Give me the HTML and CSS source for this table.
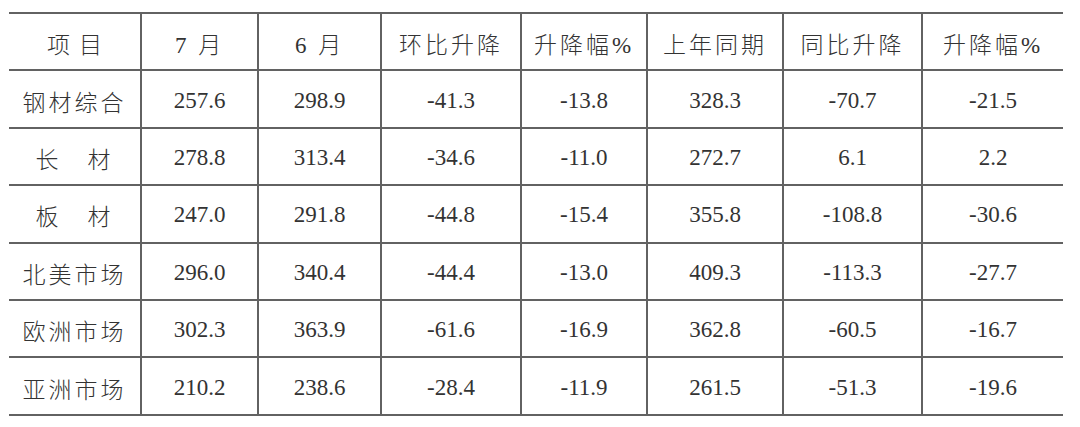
FILE: index.html
```html
<!DOCTYPE html>
<html lang="zh">
<head>
<meta charset="utf-8">
<link rel="stylesheet" href="styles.css">
</head>
<body>
<table class="data">
  <colgroup>
    <col class="c1"><col class="c2"><col class="c3"><col class="c4"><col class="c5"><col class="c6"><col class="c7"><col class="c8">
  </colgroup>
  <thead>
    <tr><th class="item">项目</th><th>7 月</th><th>6 月</th><th>环比升降</th><th>升降幅%</th><th>上年同期</th><th>同比升降</th><th>升降幅%</th></tr>
  </thead>
  <tbody>
    <tr><td class="name">钢材综合</td><td>257.6</td><td>298.9</td><td>-41.3</td><td>-13.8</td><td>328.3</td><td>-70.7</td><td>-21.5</td></tr>
    <tr><td class="name">长　材</td><td>278.8</td><td>313.4</td><td>-34.6</td><td>-11.0</td><td>272.7</td><td>6.1</td><td>2.2</td></tr>
    <tr><td class="name">板　材</td><td>247.0</td><td>291.8</td><td>-44.8</td><td>-15.4</td><td>355.8</td><td>-108.8</td><td>-30.6</td></tr>
    <tr><td class="name">北美市场</td><td>296.0</td><td>340.4</td><td>-44.4</td><td>-13.0</td><td>409.3</td><td>-113.3</td><td>-27.7</td></tr>
    <tr><td class="name">欧洲市场</td><td>302.3</td><td>363.9</td><td>-61.6</td><td>-16.9</td><td>362.8</td><td>-60.5</td><td>-16.7</td></tr>
    <tr><td class="name">亚洲市场</td><td>210.2</td><td>238.6</td><td>-28.4</td><td>-11.9</td><td>261.5</td><td>-51.3</td><td>-19.6</td></tr>
  </tbody>
</table>
</body>
</html>
```
FILE: styles.css
```css
html, body {
  margin: 0;
  padding: 0;
  background: #fff;
}
body {
  padding: 12px 0 0 9px;
}
.data {
  border-collapse: collapse;
  table-layout: fixed;
  width: 1054px;
  font-family: "Liberation Serif", "Noto Sans CJK SC", serif;
  font-size: 23px;
  font-weight: 300;
  color: #333;
}
.c1 { width: 132px; }
.c2 { width: 117px; }
.c3 { width: 123px; }
.c4 { width: 140px; }
.c5 { width: 126px; }
.c6 { width: 136px; }
.c7 { width: 139px; }
.c8 { width: 141px; }
.data th, .data td {
  box-sizing: border-box;
  height: 57.4px;
  padding: 3px 0 0 0;
  text-align: center;
  vertical-align: middle;
  font-weight: 300;
  border: 2px solid #626262;
  white-space: nowrap;
}
.data th {
  letter-spacing: 3px;
}
.data th.item {
  letter-spacing: 9px;
  padding-left: 9px;
}
.data .name {
  letter-spacing: 3px;
}
.data tr > :first-child { border-left: none; }
.data tr > :last-child { border-right: none; }
```
